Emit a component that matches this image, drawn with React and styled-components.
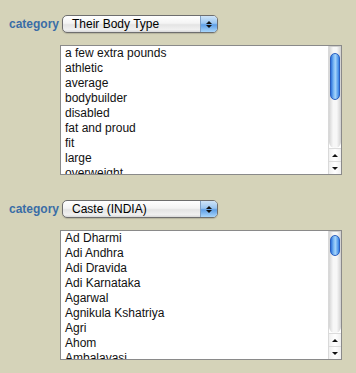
import React from 'react';
import styled, { createGlobalStyle } from 'styled-components';

const Global = createGlobalStyle`
  html, body {
    margin: 0;
    background: #d5d3b9;
  }
  body {
    font-family: "Liberation Sans", Arial, sans-serif;
  }
`;

const Page = styled.div`
  width: 356px;
  height: 373px;
  padding-top: 15px;
  box-sizing: border-box;
  background: #d5d3b9;
  overflow: hidden;
`;

const Group = styled.div`
  margin-top: ${(p) => p.$top || 0}px;
`;

const Row = styled.div`
  display: flex;
  align-items: center;
  padding-left: 9px;
`;

const Label = styled.span`
  width: 53px;
  font-size: 12px;
  font-weight: bold;
  color: #3a6da6;
`;

const Select = styled.div`
  display: flex;
  width: 156px;
  height: 18px;
  box-sizing: border-box;
  border: 1px solid #6e6e6e;
  border-radius: 5px;
  overflow: hidden;
  background: linear-gradient(#ffffff, #f4f4f4 45%, #e4e4e4 55%, #f0f0f0 85%, #d8d8d8);
  box-shadow: 0 1px 1px rgba(0, 0, 0, 0.15);
`;

const SelectText = styled.span`
  flex: 1;
  padding-left: 9px;
  font-size: 12px;
  line-height: 16px;
  color: #000;
`;

const SelectArrows = styled.div`
  width: 16px;
  display: flex;
  flex-direction: column;
  align-items: center;
  justify-content: center;
  gap: 1px;
  border-left: 1px solid #7f9fc4;
  background: linear-gradient(#cfe4f8, #9ac6f1 45%, #5f9fe6 55%, #a9d6fb);
`;

const Tri = styled.div`
  width: 0;
  height: 0;
  border-left: 3px solid transparent;
  border-right: 3px solid transparent;
  ${(p) =>
    p.$down
      ? 'border-top: 3px solid #111;'
      : 'border-bottom: 3px solid #111;'}
`;

const ListBox = styled.div`
  display: flex;
  margin: ${(p) => p.$gap}px 0 0 60px;
  width: 282px;
  height: 130px;
  box-sizing: border-box;
  border: 1px solid #8a8a8a;
  background: #fff;
`;

const Items = styled.div`
  flex: 1;
  overflow: hidden;
  padding: 0 0 0 4px;
`;

const Item = styled.div`
  font-size: 12px;
  line-height: 15px;
  color: #111;
  white-space: nowrap;
`;

const Scroll = styled.div`
  width: 12px;
  display: flex;
  flex-direction: column;
  border-left: 1px solid #d9d9d9;
  background: #fff;
`;

const Track = styled.div`
  flex: 1;
  padding-top: ${(p) => p.$off}px;
  border-radius: 0 0 6px 6px;
  border-top: 1px solid #cfcfcf;
  background: linear-gradient(90deg, #d4d4d4, #f7f7f7 35%, #f7f7f7 65%, #d0d0d0);
  display: flex;
  justify-content: center;
  align-items: flex-start;
`;

const Thumb = styled.div`
  width: 10px;
  height: ${(p) => p.$h}px;
  border-radius: 5px;
  border: 1px solid #2a5fbf;
  box-sizing: border-box;
  background: linear-gradient(90deg, #2f74dc, #7fbcf5 35%, #a4d3fb 55%, #3583e4);
`;

const ArrowBtn = styled.div`
  height: 12px;
  display: flex;
  align-items: center;
  justify-content: center;
  border-top: 1px solid #dcdcdc;
  background: linear-gradient(90deg, #f0f0f0, #ffffff 50%, #f0f0f0);
`;

const ListPanel = ({ items, gap, thumbTop, thumbHeight }) => (
  <ListBox $gap={gap}>
    <Items>
      {items.map((t) => (
        <Item key={t}>{t}</Item>
      ))}
    </Items>
    <Scroll>
      <Track $off={thumbTop}>
        <Thumb $h={thumbHeight} />
      </Track>
      <ArrowBtn>
        <Tri />
      </ArrowBtn>
      <ArrowBtn>
        <Tri $down />
      </ArrowBtn>
    </Scroll>
  </ListBox>
);

const Category = ({ value, items, top, thumbTop, thumbHeight }) => (
  <Group $top={top}>
    <Row>
      <Label>category</Label>
      <Select>
        <SelectText>{value}</SelectText>
        <SelectArrows>
          <Tri />
          <Tri $down />
        </SelectArrows>
      </Select>
    </Row>
    <ListPanel items={items} gap={12} thumbTop={thumbTop} thumbHeight={thumbHeight} />
  </Group>
);

const bodyTypes = [
  'a few extra pounds',
  'athletic',
  'average',
  'bodybuilder',
  'disabled',
  'fat and proud',
  'fit',
  'large',
  'overweight',
];

const castes = [
  'Ad Dharmi',
  'Adi Andhra',
  'Adi Dravida',
  'Adi Karnataka',
  'Agarwal',
  'Agnikula Kshatriya',
  'Agri',
  'Ahom',
  'Ambalavasi',
];

export default function App() {
  return (
    <Page>
      <Global />
      <Category value="Their Body Type" items={bodyTypes} thumbTop={6} thumbHeight={47} />
      <Category value="Caste (INDIA)" items={castes} top={25} thumbTop={3} thumbHeight={21} />
    </Page>
  );
}
